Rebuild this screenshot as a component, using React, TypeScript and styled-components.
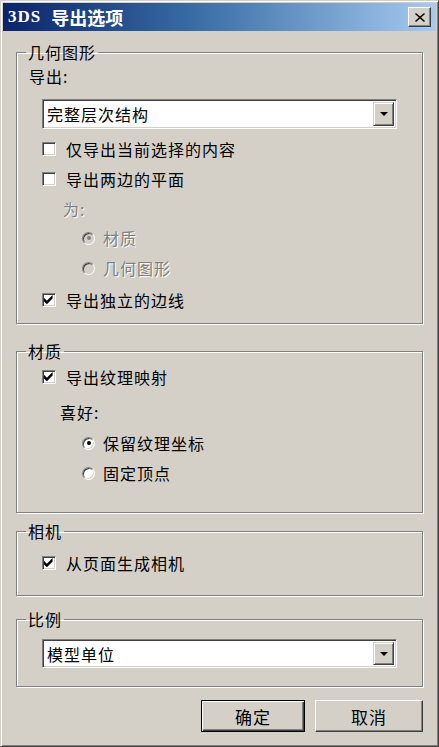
import styled, { createGlobalStyle } from "styled-components";

const face = "#d4d0c8";
const shadow = "#808080";
const dark = "#404040";

const Global = createGlobalStyle`
  html, body { margin: 0; padding: 0; background: ${face}; }
  body {
    font-family: "Noto Sans CJK SC", "Noto Sans", sans-serif;
    font-size: 16px;
    color: #000;
  }
`;

const Window = styled.div`
  box-sizing: border-box;
  width: 439px;
  height: 747px;
  background: ${face};
  border: 1px solid;
  border-color: ${face} ${dark} ${dark} ${face};
  box-shadow: inset 1px 1px #fff, inset -1px -1px ${shadow};
  padding: 2px;
  display: flex;
  flex-direction: column;
`;

const TitleBar = styled.div`
  height: 28px;
  display: flex;
  align-items: center;
  padding: 0 5px 0 5px;
  background: linear-gradient(to right, #0a246a 0%, #3a6ea5 45%, #a6caf0 100%);
  color: #fff;
  font-weight: bold;
`;

const Title = styled.div`
  flex: 1;
  display: flex;
  align-items: center;
  gap: 10px;
  font-size: 18px;
`;

const TitleTag = styled.span`
  font-family: "Liberation Serif", serif;
  font-size: 17px;
  letter-spacing: 1px;
`;

const CloseButton = styled.div`
  box-sizing: border-box;
  width: 23px;
  height: 20px;
  background: ${face};
  border: 1px solid;
  border-color: #fff ${dark} ${dark} #fff;
  box-shadow: inset -1px -1px ${shadow};
  display: flex;
  align-items: center;
  justify-content: center;
`;

const Content = styled.div`
  flex: 1;
  display: flex;
  flex-direction: column;
  padding: 0 13px;
`;

const Group = styled.fieldset<{ $top: number; $pb: number }>`
  margin: ${(p) => p.$top}px 0 0 0;
  padding: 0 0 ${(p) => p.$pb}px 0;
  border: 1px solid ${shadow};
  box-shadow: inset 1px 1px #fff, 1px 1px #fff;
  display: flex;
  flex-direction: column;
  min-width: 0;
`;

const Legend = styled.legend`
  margin-left: 9px;
  padding: 0 2px 0 2px;
  font-size: 16px;
  letter-spacing: 1px;
  line-height: 20px;
`;

const Label = styled.div<{ $indent: number; $disabled?: boolean; $mt?: number }>`
  height: 20px;
  line-height: 20px;
  margin-top: ${(p) => p.$mt ?? 0}px;
  padding-left: ${(p) => p.$indent}px;
  letter-spacing: 1px;
  color: ${(p) => (p.$disabled ? shadow : "#000")};
  text-shadow: ${(p) => (p.$disabled ? "1px 1px #fff" : "none")};
`;

const Row = styled.div<{ $indent: number; $h?: number; $mt?: number; $disabled?: boolean }>`
  height: ${(p) => p.$h ?? 30}px;
  margin-top: ${(p) => p.$mt ?? 0}px;
  padding-left: ${(p) => p.$indent}px;
  display: flex;
  align-items: center;
  gap: 10px;
  letter-spacing: 1px;
  color: ${(p) => (p.$disabled ? shadow : "#000")};
  text-shadow: ${(p) => (p.$disabled ? "1px 1px #fff" : "none")};
`;

const Box = styled.span`
  box-sizing: border-box;
  width: 14px;
  height: 14px;
  flex: none;
  background: #fff;
  border: 1px solid;
  border-color: ${shadow} #fff #fff ${shadow};
  box-shadow: inset 1px 1px ${dark}, inset -1px -1px ${face};
  display: flex;
  align-items: center;
  justify-content: center;
`;

const Radio = styled.span<{ $disabled?: boolean }>`
  box-sizing: border-box;
  width: 13px;
  height: 13px;
  flex: none;
  border-radius: 50%;
  background: ${(p) => (p.$disabled ? face : "#fff")};
  border: 1px solid;
  border-color: ${shadow} #fff #fff ${shadow};
  box-shadow: inset 1px 1px ${dark}, inset -1px -1px ${face};
  display: flex;
  align-items: center;
  justify-content: center;
  margin-right: -2px;
`;

const Dot = styled.span<{ $disabled?: boolean }>`
  width: 4px;
  height: 4px;
  border-radius: 50%;
  background: ${(p) => (p.$disabled ? shadow : "#000")};
`;

const Combo = styled.div<{ $mt: number; $h: number }>`
  box-sizing: border-box;
  height: ${(p) => p.$h}px;
  margin: ${(p) => p.$mt}px 25px 0 25px;
  background: #fff;
  border: 1px solid;
  border-color: ${shadow} #fff #fff ${shadow};
  box-shadow: inset 1px 1px ${dark}, inset -1px -1px ${face};
  padding: 2px;
  display: flex;
  align-items: stretch;
`;

const ComboText = styled.div`
  flex: 1;
  display: flex;
  align-items: center;
  padding-left: 2px;
  letter-spacing: 1px;
`;

const ComboButton = styled.div`
  box-sizing: border-box;
  width: 21px;
  background: ${face};
  border: 1px solid;
  border-color: ${face} ${dark} ${dark} ${face};
  box-shadow: inset 1px 1px #fff, inset -1px -1px ${shadow};
  display: flex;
  align-items: center;
  justify-content: center;
`;

const Arrow = styled.span`
  width: 0;
  height: 0;
  border-left: 4px solid transparent;
  border-right: 4px solid transparent;
  border-top: 4px solid #000;
`;

const Footer = styled.div`
  display: flex;
  justify-content: flex-end;
  gap: 10px;
  margin-top: 13px;
`;

const Button = styled.div<{ $default?: boolean }>`
  box-sizing: border-box;
  width: ${(p) => (p.$default ? 104 : 108)}px;
  height: 32px;
  background: ${face};
  border: 1px solid;
  border-color: ${(p) => (p.$default ? "#000" : `#fff ${dark} ${dark} #fff`)};
  box-shadow: ${(p) =>
    p.$default
      ? `inset 1px 1px #fff, inset -1px -1px ${dark}, inset -2px -2px ${shadow}`
      : `inset -1px -1px ${shadow}`};
  display: flex;
  align-items: center;
  justify-content: center;
  font-size: 17px;
  letter-spacing: 1px;
`;

function Check({ on }: { on?: boolean }) {
  return (
    <Box>
      {on && (
        <svg width="10" height="10" viewBox="0 0 7 7">
          <path d="M0 2 L2 4 L6 0 V2.5 L2 6.5 L0 4.5 Z" fill="#000" />
        </svg>
      )}
    </Box>
  );
}

function CheckRow({ label, on, h, mt }: { label: string; on?: boolean; h?: number; mt?: number }) {
  return (
    <Row $indent={25} $h={h} $mt={mt}>
      <Check on={on} />
      <span>{label}</span>
    </Row>
  );
}

function RadioRow({
  label,
  on,
  disabled,
  mt,
}: {
  label: string;
  on?: boolean;
  disabled?: boolean;
  mt?: number;
}) {
  return (
    <Row $indent={65} $disabled={disabled} $mt={mt}>
      <Radio $disabled={disabled}>{on && <Dot $disabled={disabled} />}</Radio>
      <span>{label}</span>
    </Row>
  );
}

function Select({ value, mt, h }: { value: string; mt: number; h: number }) {
  return (
    <Combo $mt={mt} $h={h}>
      <ComboText>{value}</ComboText>
      <ComboButton>
        <Arrow />
      </ComboButton>
    </Combo>
  );
}

export default function App() {
  return (
    <>
      <Global />
      <Window>
        <TitleBar>
          <Title>
            <TitleTag>3DS</TitleTag>
            <span>导出选项</span>
          </Title>
          <CloseButton>
            <svg width="10" height="9" viewBox="0 0 10 9">
              <path d="M1 0 L5 3.5 L9 0 L10 1 L6 4.5 L10 8 L9 9 L5 5.5 L1 9 L0 8 L4 4.5 L0 1 Z" fill="#000" />
            </svg>
          </CloseButton>
        </TitleBar>
        <Content>
          <Group $top={11} $pb={6}>
            <Legend>几何图形</Legend>
            <Label $indent={12} $mt={4}>导出:</Label>
            <Select value="完整层次结构" mt={13} h={30} />
            <CheckRow label="仅导出当前选择的内容" mt={5} />
            <CheckRow label="导出两边的平面" />
            <Label $indent={46} $disabled $mt={5}>为:</Label>
            <RadioRow label="材质" on disabled mt={4} />
            <RadioRow label="几何图形" disabled />
            <CheckRow label="导出独立的边线" on h={34} />
          </Group>
          <Group $top={17} $pb={24}>
            <Legend>材质</Legend>
            <CheckRow label="导出纹理映射" on mt={1} />
            <Label $indent={43} $mt={10}>喜好:</Label>
            <RadioRow label="保留纹理坐标" on mt={6} />
            <RadioRow label="固定顶点" />
          </Group>
          <Group $top={8} $pb={17}>
            <Legend>相机</Legend>
            <CheckRow label="从页面生成相机" on mt={7} />
          </Group>
          <Group $top={13} $pb={18}>
            <Legend>比例</Legend>
            <Select value="模型单位" mt={10} h={29} />
          </Group>
          <Footer>
            <Button $default>确定</Button>
            <Button>取消</Button>
          </Footer>
        </Content>
      </Window>
    </>
  );
}
